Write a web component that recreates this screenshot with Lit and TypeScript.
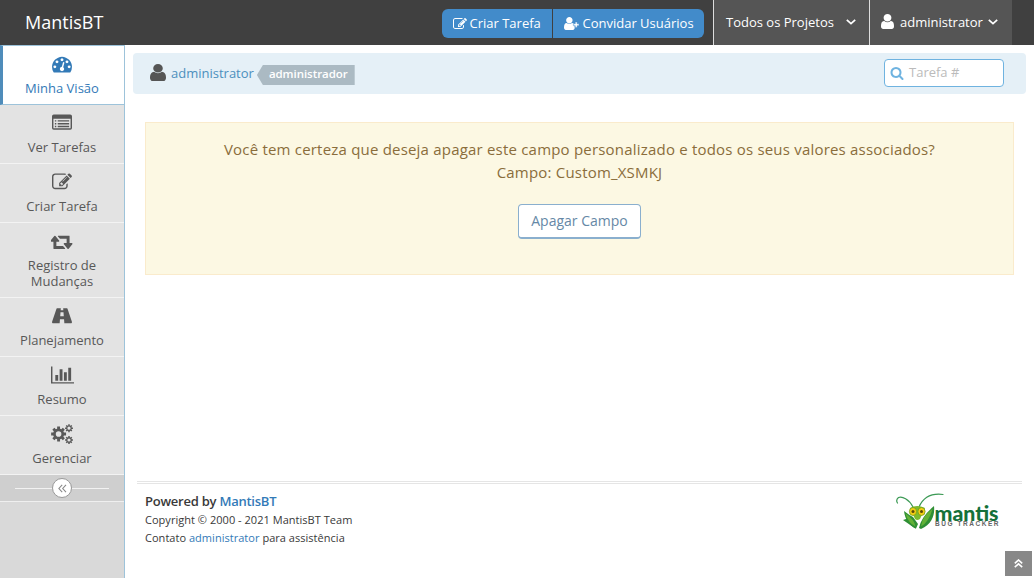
import { LitElement, html, svg, css } from "lit";
import { customElement } from "lit/decorators.js";

const P = {
  user: "M1536 1399q0 109-62.5 187t-150.5 78h-854q-88 0-150.5-78t-62.5-187q0-85 8.5-160.5t31.5-152 58.5-131 94-89 134.5-34.5q131 128 313 128t313-128q76 0 134.5 34.5t94 89 58.5 131 31.5 152 8.5 160.5zm-256-887q0 159-112.5 271.5t-271.5 112.5-271.5-112.5-112.5-271.5 112.5-271.5 271.5-112.5 271.5 112.5 112.5 271.5z",
  search: "M1216 832q0-185-131.5-316.5t-316.5-131.5-316.5 131.5-131.5 316.5 131.5 316.5 316.5 131.5 316.5-131.5 131.5-316.5zm512 832q0 52-38 90t-90 38q-54 0-90-38l-343-342q-179 124-399 124-143 0-273.5-55.5t-225-150-150-225-55.5-273.5 55.5-273.5 150-225 225-150 273.5-55.5 273.5 55.5 225 150 150 225 55.5 273.5q0 220-124 399l343 343q37 37 37 90z",
  retweet: "M1216 1504q0 13-9.5 22.5t-22.5 9.5h-960q-8 0-13.5-2t-9-7-5.5-8-3-11.5-1-11.5v-600h-192q-26 0-45-19t-19-45q0-24 15-41l320-384q19-22 49-22t49 22l320 384q15 17 15 41 0 26-19 45t-45 19h-192v384h576q16 0 25 11l160 192q7 10 7 21zm640-416q0 24-15 41l-320 384q-20 23-49 23t-49-23l-320-384q-15-17-15-41 0-26 19-45t45-19h192v-384h-576q-16 0-25-12l-160-192q-7-9-7-20 0-13 9.5-22.5t22.5-9.5h960q8 0 13.5 2t9 7 5.5 8 3 11.5 1 11.5v600h192q26 0 45 19t19 45z",
  edit: "M888 1184l116-116-152-152-116 116v56h96v96h56zm440-720q-16-16-33 1l-350 350q-17 17-1 33t33-1l350-350q17-17 1-33zm80 594v190q0 119-84.5 203.5t-203.5 84.5h-832q-119 0-203.5-84.5t-84.5-203.5v-832q0-119 84.5-203.5t203.5-84.5h832q63 0 117 25 15 7 18 23 3 17-9 29l-49 49q-14 14-32 8-23-6-45-6h-832q-66 0-113 47t-47 113v832q0 66 47 113t113 47h832q66 0 113-47t47-113v-126q0-13 9-22l64-64q15-15 35-7t20 29zm-96-738l288 288-672 672h-288v-288zm444 132l-92 92-288-288 92-92q28-28 68-28t68 28l152 152q28 28 28 68t-28 68z",
  gauge: "M384 1152q0-53-37.5-90.5t-90.5-37.5-90.5 37.5-37.5 90.5 37.5 90.5 90.5 37.5 90.5-37.5 37.5-90.5zm192-448q0-53-37.5-90.5t-90.5-37.5-90.5 37.5-37.5 90.5 37.5 90.5 90.5 37.5 90.5-37.5 37.5-90.5zm428 481l101-382q6-26-7.5-48.5t-38.5-29.5-48 6.5-30 39.5l-101 382q-60 5-107 43.5t-63 98.5q-20 77 20 146t117 89 146-20 89-117q16-60-6-117t-72-91zm660-33q0-53-37.5-90.5t-90.5-37.5-90.5 37.5-37.5 90.5 37.5 90.5 90.5 37.5 90.5-37.5 37.5-90.5zm-640-640q0-53-37.5-90.5t-90.5-37.5-90.5 37.5-37.5 90.5 37.5 90.5 90.5 37.5 90.5-37.5 37.5-90.5zm448 192q0-53-37.5-90.5t-90.5-37.5-90.5 37.5-37.5 90.5 37.5 90.5 90.5 37.5 90.5-37.5 37.5-90.5zm320 448q0 261-141 483-19 29-54 29h-1402q-35 0-54-29-141-221-141-483 0-182 71-348t191-286 286-191 348-71 348 71 286 191 191 286 71 348z",
  list: "M256 1152h128v128h-128zM256 896h128v128h-128zM256 640h128v128h-128zM512 1152h1024v128h-1024zM512 896h1024v128h-1024zM512 640h1024v128h-1024zM128 512v832q0 32 32 32h1472q32 0 32-32v-832zM160 128h1472q160 0 160 160v1056q0 160-160 160h-1472q-160 0-160-160v-1056q0-160 160-160z",
  bars: "M640 896v512h-256v-512h256zm384-512v1024h-256v-1024h256zm1024 1152v128h-2048v-1536h128v1408h1920zm-640-896v768h-256v-768h256zm384-384v1152h-256v-1152h256z",
  road: "M460 192h330l-14 190h240l-14-190h330q35 0 50 42l395 1150q35 152-50 152h-620l-28-360h-366l-28 360h-620q-85 0-50-152l395-1150q15-42 50-42zM762 570l-26 350h320l-26-350z",
};

/* Outline of a cog with eight teeth and a round hole. */
function gear(cx: number, cy: number, r: number, inner: number, hole: number): string {
  const pts: string[] = [];
  for (let i = 0; i < 8; i++) {
    for (const [o, q] of [[-0.27, inner], [-0.19, r], [0.19, r], [0.27, inner]]) {
      const a = (i * Math.PI) / 4 + o;
      pts.push(`${(cx + Math.cos(a) * q).toFixed(2)} ${(cy + Math.sin(a) * q).toFixed(2)}`);
    }
  }
  return `M${pts.join("L")}ZM${cx - hole} ${cy}a${hole} ${hole} 0 1 0 ${hole * 2} 0a${hole} ${hole} 0 1 0 ${-hole * 2} 0Z`;
}

const icon = (d: string, w = 20, h = 20, box = "0 0 1792 1792") =>
  html`<svg class="ic" width=${w} height=${h} viewBox=${box} preserveAspectRatio="none"><path fill="currentColor" fill-rule="evenodd" d=${d}></path></svg>`;

const cogs = gear(7.6, 10, 7.6, 5.5, 2.8) + gear(18, 4.2, 4, 2.8, 1.6) + gear(18, 16, 4, 2.8, 1.6);

const chevron = html`<svg class="chev" width="10" height="6" viewBox="0 0 10 6"><path d="M.8 .8 5 4.700 9.200 .8" fill="none" stroke="currentColor" stroke-width="1.700"></path></svg>`;

const items = [
  { label: "Minha Visão", ic: icon(P.gauge), active: true },
  { label: "Ver Tarefas", ic: icon(P.list) },
  { label: "Criar Tarefa", ic: icon(P.edit) },
  { label: "Registro de Mudanças", ic: icon(P.retweet, 22, 20, "-20 -40 1920 1760") },
  { label: "Planejamento", ic: icon(P.road) },
  { label: "Resumo", ic: icon(P.bars, 23, 20, "0 0 2048 1792") },
  { label: "Gerenciar", ic: icon(cogs, 22, 20, "0 0 22 20") },
];

const mantis = svg`
  <g fill="none" stroke="#3c9a55" stroke-width="1.200" stroke-linecap="round">
    <path d="M17 14C13 6 6 3 2.500 4.500Q-.5 7 1.500 10"></path>
    <path d="M23 14C27 5 35 0 47 1.500"></path>
  </g>
  <path fill="#2f8f35" d="M8 18C9 27 14 33 20 35.500L22 31L17 24Q13 22 8 18Z"></path>
  <path fill="#2f8f35" d="M7 27L20 36L13 25ZM38 13C39 22 36 31 25 36L23 35Q25 24 38 13Z"></path>
  <path fill="#62b136" d="M36.500 16Q26 23 25 33.500Q33 29 36.500 16ZM9.500 20.500Q12 30 19.500 33.500Q18 26 9.500 20.500Z"></path>
  <path fill="#7dbb2c" d="M14 15Q21 11 29 15L24 26Q21 28 19 26Z"></path>
  <ellipse cx="17" cy="18.500" rx="3.600" ry="4" fill="#f3cd12" stroke="#719d1b" stroke-width=".8"></ellipse>
  <ellipse cx="25.500" cy="18.500" rx="3.600" ry="4" fill="#f3cd12" stroke="#719d1b" stroke-width=".8"></ellipse>
  <circle cx="17" cy="18.500" r="1.500" fill="#5a4a08"></circle>
  <circle cx="25.500" cy="18.500" r="1.500" fill="#5a4a08"></circle>
  <text x="38.500" y="27.700" class="lg" textLength="64" lengthAdjust="spacingAndGlyphs">mantis</text>
  <text x="39" y="33.200" class="sm" textLength="63.500" lengthAdjust="spacing">BUG TRACKER</text>`;

@customElement("app-root")
export class AppRoot extends LitElement {
  static styles = css`
    :host { display: flex; flex-direction: column; height: 578px; position: relative; overflow: hidden; background: #fff; color: #393939; font: 13px/19.5px "Open Sans", sans-serif; }
    * { box-sizing: border-box; }
    svg { display: block; flex: none; }
    a { color: #337ab7; text-decoration: none; }
    .nav { height: 45px; flex: none; display: flex; background: #404040; color: #fff; padding-right: 22px; }
    .brand { flex: 1; padding-left: 25px; font-size: 18px; line-height: 44px; }
    .group { display: flex; gap: 1px; align-items: flex-start; padding-top: 9px; margin-right: 9px; }
    .btn { height: 29px; background: #428bca; display: flex; align-items: center; white-space: nowrap; }
    .btn.a { width: 110px; padding-left: 11px; gap: 3px; border-radius: 6px 0 0 6px; }
    .btn.b { width: 151px; padding-left: 11px; gap: 3px; border-radius: 0 6px 6px 0; }
    .btn.a .ic { width: 14px; height: 14px; margin-right: -.5px; }
    .btn.b .ic { margin-right: .5px; }
    .drop { display: flex; align-items: center; background: #555; border-left: 1px solid #ddd; padding-left: 12px; white-space: nowrap; }
    .drop.p { width: 156px; gap: 12px; }
    .drop.u { width: 143px; gap: 6px; padding-left: 11px; }
    .drop.u .ic { margin-bottom: 2px; }
    .drop.u .chev { margin-left: -1px; }
    .chev { margin-bottom: 1px; }
    .body { flex: 1; display: flex; min-height: 0; }
    .side { width: 125px; flex: none; background: #d9d9d9; border-right: 1px solid #9dc3da; }
    .item { display: flex; flex-direction: column; align-items: center; padding: 8px 8px; min-height: 59px; background: #e3e3e3; border-bottom: 1px solid #f3f3f3; color: #585858; line-height: 16px; text-align: center; }
    .item .ic { margin-bottom: 6px; }
    .item.on { height: 60px; background: #fff; color: #337ab7; border: 1px solid #9dc3da; border-right: 0; border-left: 3px solid #4f8cba; padding: 8px 8px 8px 5px; }
    .toggle { height: 27px; background: #cfcfcf; border-bottom: 1px solid #efefef; display: flex; align-items: center; padding: 0 15px; }
    .rule { flex: 1; height: 1px; background: #f2f2f2; }
    .round { width: 20px; height: 20px; border: 1px solid #999; border-radius: 50%; background: #fff; color: #888; display: grid; place-items: center; }
    .main { flex: 1; display: flex; flex-direction: column; }
    .crumb { height: 41px; margin: 8px 8px 0; background: #e5f0f7; border-radius: 4px; display: flex; align-items: center; padding: 0 22px 0 17px; color: #4c8fbd; }
    .who { display: flex; align-items: center; color: #4c8fbd; gap: 5px; }
    .who .ic { color: #555; margin-bottom: 2px; }
    .tag { height: 20px; margin: 3px 0 0 3px; padding: 0 7px 0 12px; background: #abbac3; color: #fff; font-size: 11.5px; font-weight: 600; letter-spacing: -.05px; line-height: 18px; clip-path: polygon(6px 0, 100% 0, 100% 100%, 6px 100%, 0 50%); }
    .search { margin: 0 0 2px auto; width: 120px; height: 28px; background: #fff; border: 1px solid #6fb3e0; border-radius: 4px; display: flex; align-items: center; padding-left: 5px; gap: 5px; color: #bbb; }
    .search .ic { color: #6fb3e0; }
    .warn { margin: 28px 20px 0; height: 153px; background: #fcf8e3; border: 1px solid #faebcc; color: #8a6d3b; font-size: 15px; letter-spacing: .2px; line-height: 23px; text-align: center; padding-top: 15px; display: flex; flex-direction: column; align-items: center; }
    .del { margin-top: 20px; width: 123px; height: 35px; background: #fff; border: 1px solid #8aafce; border-bottom-width: 2px; border-radius: 4px; color: #6688a6; font-size: 14px; letter-spacing: 0; line-height: 32px; }
    .foot { margin: auto 12px 0; height: 97px; border-top: 3px double #e5e5e5; padding: 9px 20px 0 8px; display: flex; justify-content: space-between; font-size: 11px; line-height: 18px; letter-spacing: .03px; }
    .pow { font-size: 13px; font-weight: 600; line-height: 16px; padding-bottom: 2px; letter-spacing: -.24px; }
    .lg { font: 900 21px Lato, sans-serif; fill: #14713a; letter-spacing: 0; }
    .sm { font: 700 6.500px "Liberation Sans", sans-serif; fill: #666; letter-spacing: 0; }
    .up { position: absolute; right: 2px; bottom: 2px; width: 27px; height: 25px; background: #888; color: #fff; display: grid; place-items: center; }
  `;

  render() {
    return html`
      <header class="nav">
        <div class="brand">MantisBT</div>
        <div class="group">
          <div class="btn a">${icon(P.edit, 13, 13)}<span>Criar Tarefa</span></div>
          <div class="btn b">
            <svg class="ic" width="15" height="13" viewBox="0 0 1792 1536" preserveAspectRatio="none"><g fill="currentColor"><path transform="translate(-256 -128)" d=${P.user}></path><path d="M1216 704h224v-224h224v224h224v224h-224v224h-224v-224h-224z" transform="translate(-96 100)" stroke="#428bca" stroke-width="60"></path></g></svg>
            <span>Convidar Usuários</span>
          </div>
        </div>
        <div class="drop p"><span>Todos os Projetos</span>${chevron}</div>
        <div class="drop u">${icon(P.user, 13, 15, "256 128 1280 1536")}<span>administrator</span>${chevron}</div>
      </header>
      <div class="body">
        <nav class="side">
          ${items.map((i) => html`<div class="item ${i.active ? "on" : ""}">${i.ic}<span>${i.label}</span></div>`)}
          <div class="toggle">
            <i class="rule"></i>
            <div class="round"><svg width="9" height="9" viewBox="0 0 9 9"><path d="M4.200 .8.900 4.500l3.300 3.700M8 .8 4.700 4.500 8 8.200" fill="none" stroke="currentColor" stroke-width="1.100"></path></svg></div>
            <i class="rule"></i>
          </div>
        </nav>
        <main class="main">
          <div class="crumb">
            <div class="who">${icon(P.user, 16, 17, "256 128 1280 1536")}<span>administrator</span></div>
            <span class="tag">administrador</span>
            <div class="search">${icon(P.search, 14, 14)}<span>Tarefa #</span></div>
          </div>
          <section class="warn">
            <div>Você tem certeza que deseja apagar este campo personalizado e todos os seus valores associados?</div>
            <div>Campo: Custom_XSMKJ</div>
            <div class="del">Apagar Campo</div>
          </section>
          <footer class="foot">
            <div>
              <div class="pow">Powered by <a>MantisBT</a></div>
              <div>Copyright © 2000 - 2021 MantisBT Team</div>
              <div>Contato <a>administrator</a> para assistência</div>
            </div>
            <svg width="106" height="40" viewBox="0 0 106 40">${mantis}</svg>
          </footer>
        </main>
      </div>
      <div class="up"><svg width="9" height="9" viewBox="0 0 9 9"><path d="M.8 4.400 4.500 1l3.700 3.400M.8 8.200l3.700-3.400 3.700 3.400" fill="none" stroke="currentColor" stroke-width="1.600"></path></svg></div>
    `;
  }
}
